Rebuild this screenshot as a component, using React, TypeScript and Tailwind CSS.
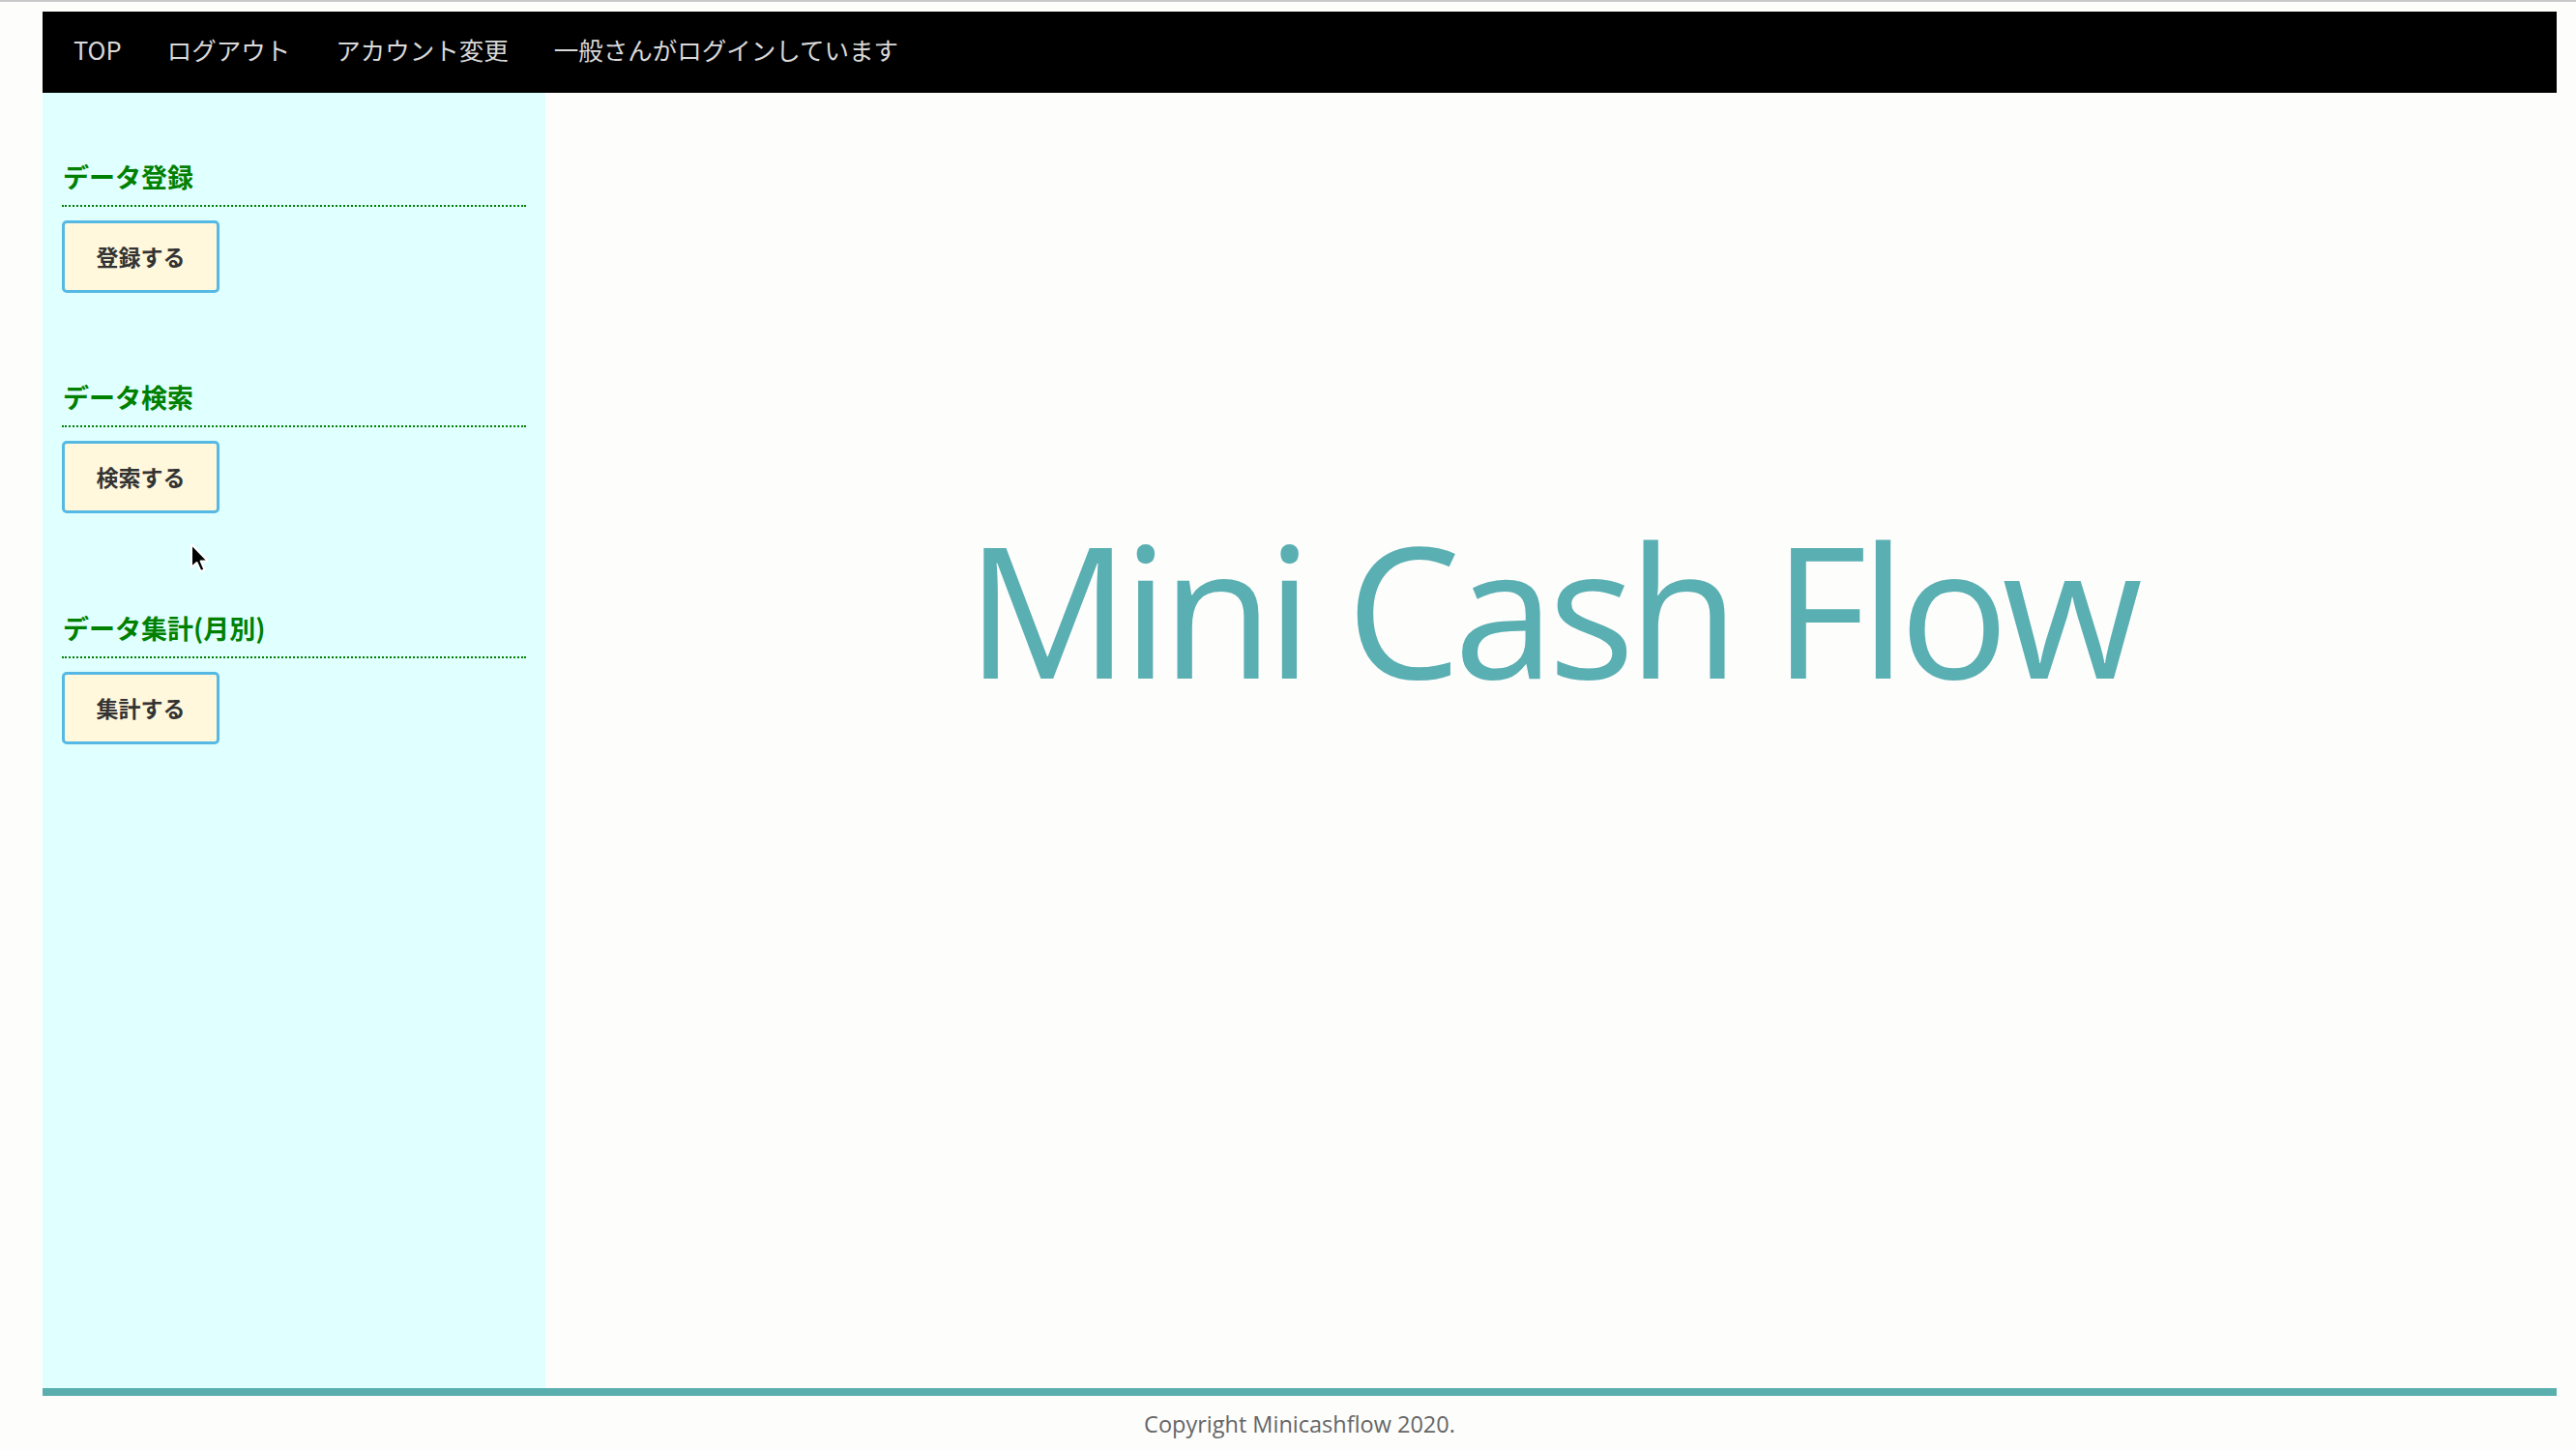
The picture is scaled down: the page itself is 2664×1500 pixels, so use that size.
import React from 'react';

const jp = { fontFamily: '"Noto Sans CJK JP", "Noto Sans", sans-serif' };

const navItems = ['TOP', 'ログアウト', 'アカウント変更', '一般さんがログインしています'];

const sections = [
  { title: 'データ登録', label: '登録する', gap: 'mt-[69px]' },
  { title: 'データ検索', label: '検索する', gap: 'mt-[90px]' },
  { title: 'データ集計(月別)', label: '集計する', gap: 'mt-[101px]' },
];

function Cursor() {
  return (
    <svg className="absolute left-[196px] top-[561px]" width="24" height="36" viewBox="0 0 24 36">
      <path
        d="M2 2 L2 26 L7.5 21 L11.5 30 L15.5 28.3 L11.6 19.4 L18.8 19.4 Z"
        fill="#000"
        stroke="#fff"
        strokeWidth="2"
        strokeLinejoin="round"
      />
    </svg>
  );
}

export default function App() {
  return (
    <div className="relative min-h-screen bg-[#fdfdfc]" style={jp}>
      <div className="h-[2px] bg-[#c9c9cc]" />
      <div className="ml-[44px] mt-[10px] w-[2600px]">
        {/* header */}
        <nav className="flex h-[84px] items-center gap-[47px] bg-black pb-[6px] pl-[32px] text-[25.5px] text-[#d9d9d9]">
          {navItems.map((item) => (
            <span key={item}>{item}</span>
          ))}
        </nav>

        <div className="flex h-[1340px]">
          {/* sidebar */}
          <aside className="w-[520px] bg-[#e0ffff] px-[20px]">
            {sections.map((s) => (
              <div key={s.title} className={s.gap}>
                <h2 className="border-b-2 border-dotted border-[#008000] pb-[11px] pl-[1px] text-[27px] font-bold leading-[36px] text-[#008000]">
                  {s.title}
                </h2>
                <button
                  type="button"
                  className="mt-[14px] flex h-[75px] w-[163px] items-center justify-center rounded-[5px] border-[3px] border-[#55b9e4] bg-[#fff8dc] text-[23px] font-bold text-[#333]"
                >
                  {s.label}
                </button>
              </div>
            ))}
          </aside>

          {/* main */}
          <main className="flex flex-1 justify-center pt-[439px]">
            <h1
              className="text-[188px] leading-none tracking-[-7px] text-[#5aafb2]"
              style={{ fontFamily: '"Open Sans", sans-serif' }}
            >
              Mini Cash Flow
            </h1>
          </main>
        </div>

        <div className="h-[8px] bg-[#5aafae]" />
        <footer
          className="mt-[11px] text-center text-[23.5px] leading-[36px] text-[#666]"
          style={{ fontFamily: '"Open Sans", sans-serif' }}
        >
          Copyright Minicashflow 2020.
        </footer>
      </div>
      <Cursor />
    </div>
  );
}
